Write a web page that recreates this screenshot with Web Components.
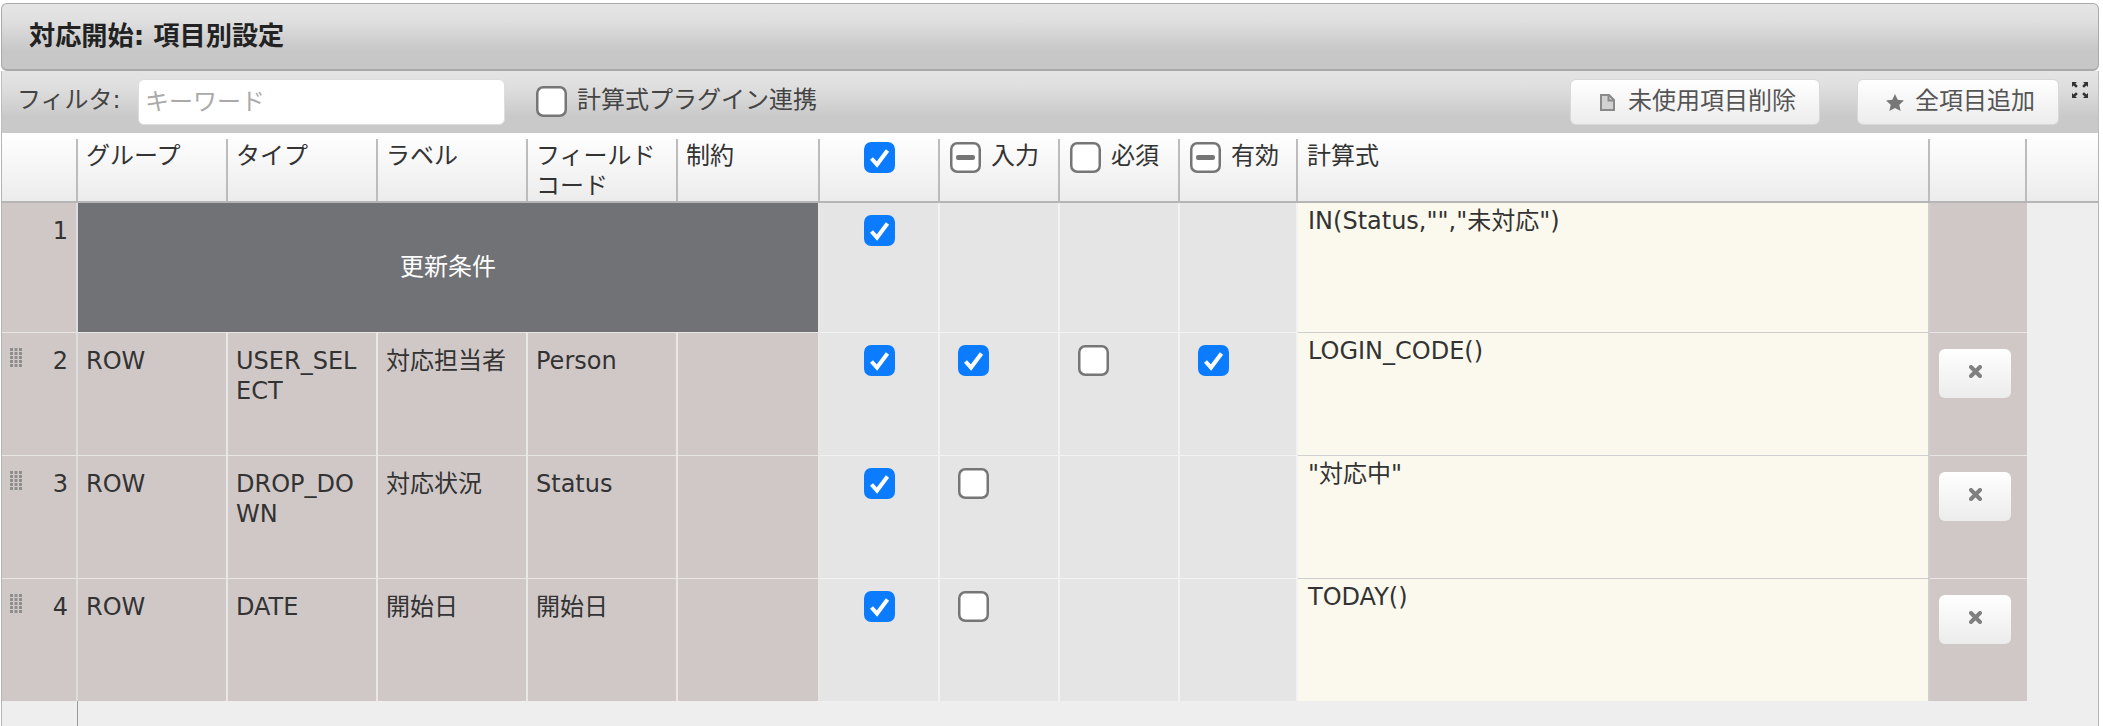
<!DOCTYPE html>
<html lang="ja">
<head>
<meta charset="utf-8">
<title>項目別設定</title>
<style>
    html, body { margin: 0; height: 100%; background: #fff; overflow: hidden; }
    body {
        padding: 3px 4px 0 1px;
        box-sizing: border-box;
        display: flex;
        flex-direction: column;
        font: 24px/30px "DejaVu Sans", "Noto Sans CJK JP", sans-serif;
        color: #333;
    }
</style>
</head>
<body>
<panel-title>対応開始: 項目別設定</panel-title>
<panel-toolbar>
    <span slot="label">フィルタ:</span>
    <check-label slot="link">計算式プラグイン連携</check-label>
    <ui-button icon="file" slot="actions">未使用項目削除</ui-button>
    <ui-button icon="star" slot="actions">全項目追加</ui-button>
</panel-toolbar>
<field-table>
    <table-row kind="head">
        <table-cell kind="head"></table-cell>
        <table-cell kind="head">グループ</table-cell>
        <table-cell kind="head">タイプ</table-cell>
        <table-cell kind="head">ラベル</table-cell>
        <table-cell kind="head">フィールド コード</table-cell>
        <table-cell kind="head">制約</table-cell>
        <table-cell kind="head" center><ui-check state="on"></ui-check></table-cell>
        <table-cell kind="head" tight><ui-check state="mixed"></ui-check>入力</table-cell>
        <table-cell kind="head" tight><ui-check></ui-check>必須</table-cell>
        <table-cell kind="head" tight><ui-check state="mixed"></ui-check>有効</table-cell>
        <table-cell kind="head" wide>計算式</table-cell>
        <table-cell kind="head"></table-cell>
        <table-cell kind="head" last></table-cell>
    </table-row>
    <table-row style="--row-h:130px">
        <table-cell kind="num">1</table-cell>
        <table-cell kind="banner" style="grid-column: span 5">更新条件</table-cell>
        <table-cell kind="flag" center><ui-check state="on"></ui-check></table-cell>
        <table-cell kind="flag"></table-cell>
        <table-cell kind="flag"></table-cell>
        <table-cell kind="flag"></table-cell>
        <table-cell kind="formula">IN(Status,"","未対応")</table-cell>
        <table-cell kind="tool"></table-cell>
    </table-row>
    <table-row>
        <table-cell kind="num" grip>2</table-cell>
        <table-cell>ROW</table-cell>
        <table-cell>USER_SEL<br>ECT</table-cell>
        <table-cell>対応担当者</table-cell>
        <table-cell>Person</table-cell>
        <table-cell></table-cell>
        <table-cell kind="flag" center><ui-check state="on"></ui-check></table-cell>
        <table-cell kind="flag" pad><ui-check state="on"></ui-check></table-cell>
        <table-cell kind="flag" pad><ui-check></ui-check></table-cell>
        <table-cell kind="flag" pad><ui-check state="on"></ui-check></table-cell>
        <table-cell kind="formula">LOGIN_CODE()</table-cell>
        <table-cell kind="tool"><ui-remove></ui-remove></table-cell>
    </table-row>
    <table-row>
        <table-cell kind="num" grip>3</table-cell>
        <table-cell>ROW</table-cell>
        <table-cell>DROP_DO<br>WN</table-cell>
        <table-cell>対応状況</table-cell>
        <table-cell>Status</table-cell>
        <table-cell></table-cell>
        <table-cell kind="flag" center><ui-check state="on"></ui-check></table-cell>
        <table-cell kind="flag" pad><ui-check></ui-check></table-cell>
        <table-cell kind="flag"></table-cell>
        <table-cell kind="flag"></table-cell>
        <table-cell kind="formula">"対応中"</table-cell>
        <table-cell kind="tool"><ui-remove></ui-remove></table-cell>
    </table-row>
    <table-row style="--row-h:122px" end>
        <table-cell kind="num" grip>4</table-cell>
        <table-cell>ROW</table-cell>
        <table-cell>DATE</table-cell>
        <table-cell>開始日</table-cell>
        <table-cell>開始日</table-cell>
        <table-cell></table-cell>
        <table-cell kind="flag" center><ui-check state="on"></ui-check></table-cell>
        <table-cell kind="flag" pad><ui-check></ui-check></table-cell>
        <table-cell kind="flag"></table-cell>
        <table-cell kind="flag"></table-cell>
        <table-cell kind="formula">TODAY()</table-cell>
        <table-cell kind="tool"><ui-remove></ui-remove></table-cell>
    </table-row>
</field-table>

<script>
const COLUMNS = "76px 150px 150px 150px 150px 142px 120px 120px 120px 118px 632px 97px 1fr";

class PanelTitle extends HTMLElement {
    constructor() {
        super();
        this.attachShadow({ mode: "open" });
        this.shadowRoot.innerHTML = `
        <style>
            :host {
                display: flex;
                align-items: center;
                flex: none;
                box-sizing: border-box;
                height: 68px;
                padding: 0 0 2px 27px;
                border: 1px solid #a9a9a9;
                border-bottom-width: 2px;
                border-radius: 6px;
                background: linear-gradient(#e5e5e5, #e0e0e0 25%, #c7c7c7 72%);
                font-size: 26.200px;
                font-weight: 700;
                color: #222;
            }
        </style>
        <slot></slot>
        `;
    }
}

class PanelToolbar extends HTMLElement {
    constructor() {
        super();
        this.attachShadow({ mode: "open" });
        this.shadowRoot.innerHTML = `
        <style>
            :host {
                display: flex;
                align-items: flex-start;
                flex: none;
                box-sizing: border-box;
                height: 62px;
                padding: 8px 0 0 15px;
                border: solid #bdbdbd;
                border-width: 0 1px;
                background: linear-gradient(#e4e4e4, #dfdfdf 25%, #c9c9c9 75%);
                color: #444;
            }
            .label { width: 121px; line-height: 43px; white-space: nowrap; }
            input {
                box-sizing: border-box;
                width: 367px;
                height: 46px;
                margin-right: 31px;
                padding: 0 6px;
                border: 1px solid #ddd;
                border-radius: 6px;
                background: #fff;
                font: inherit;
                outline: none;
            }
            input::placeholder { color: #aaa; }
            .actions {
                display: flex;
                gap: 37px;
                margin-left: auto;
            }
            svg {
                flex: none;
                width: 16px;
                height: 16px;
                margin: 3px 10px 0 13px;
                fill: #333;
            }
        </style>
        <span class="label"><slot name="label"></slot></span>
        <input placeholder="キーワード">
        <slot name="link"></slot>
        <div class="actions"><slot name="actions"></slot></div>
        <svg viewBox="0 0 16 16" aria-hidden="true">
            <path d="M0 0h5L3.400 1.600 5.800 4 4 5.800 1.600 3.400 0 5zM16 0v5l-1.600-1.600L12 5.800 10.200 4l2.400-2.400L11 0zM0 16v-5l1.600 1.600L4 10.200 5.800 12l-2.400 2.400L5 16zM16 16h-5l1.600-1.600-2.400-2.400 1.800-1.800 2.400 2.400L16 11z"/>
        </svg>
        `;
    }
}

class CheckLabel extends HTMLElement {
    constructor() {
        super();
        this.attachShadow({ mode: "open" });
        this.shadowRoot.innerHTML = `
        <style>
            :host {
                display: flex;
                align-items: flex-start;
                gap: 10px;
                height: 46px;
                line-height: 30px;
            }
            ui-check { margin-top: 7px; }
            span { margin-top: 6px; }
        </style>
        <ui-check></ui-check>
        <span><slot></slot></span>
        `;
    }
}

class UiButton extends HTMLElement {
    static get icons() {
        return {
            file: `<path d="M2 1h8l5 5v10H2z" fill="#d2d2d2" stroke="#8a8a8a" stroke-width="2"/><path d="M9.500 1v5.500H15" fill="none" stroke="#8a8a8a" stroke-width="2"/>`,
            star: `<path fill="#777" d="M9 0l2.700 5.800 6.300.7-4.700 4.200 1.300 6.300L9 13.900 3.400 17l1.300-6.300L0 6.500l6.300-.7z"/>`
        };
    }

    constructor() {
        super();
        this.attachShadow({ mode: "open" });
        const icon = UiButton.icons[this.getAttribute("icon")];
        this.shadowRoot.innerHTML = `
        <style>
            :host {
                display: inline-flex;
                align-items: center;
                box-sizing: border-box;
                height: 46px;
                padding: 0 23px 0 28px;
                border: 1px solid #d8d8d8;
                border-radius: 6px;
                background: linear-gradient(#fff, #ececec);
                color: #555;
                line-height: 30px;
            }
            slot { display: block; margin-top: -2px; }
            svg { flex: none; width: 18px; height: 17px; margin-right: 11px; }
        </style>
        <svg viewBox="0 0 18 17" aria-hidden="true">${icon}</svg>
        <slot></slot>
        `;
    }
}

class UiCheck extends HTMLElement {
    constructor() {
        super();
        this.attachShadow({ mode: "open" });
        const state = this.getAttribute("state");
        let mark = "";
        if (state == "on") {
            mark = `<path d="M7.500 16.500l5.500 6L23.500 8.500" fill="none" stroke="#fff" stroke-width="4"/>`;
        }
        if (state == "mixed") {
            mark = `<rect x="6" y="13" width="19" height="5" rx="2" fill="#767676"/>`;
        }
        this.shadowRoot.innerHTML = `
        <style>
            :host {
                display: inline-block;
                flex: none;
                width: 31px;
                height: 31px;
                vertical-align: top;
            }
            :host([state="on"]) .box { fill: #0b7bff; stroke: #0b7bff; }
            svg { display: block; width: 31px; height: 31px; }
            .box { fill: #fff; stroke: #767676; stroke-width: 2.500; }
        </style>
        <svg viewBox="0 0 31 31" aria-hidden="true">
            <rect class="box" x="1.250" y="1.250" width="28.500" height="28.500" rx="6"/>
            ${mark}
        </svg>
        `;
    }
}

class UiRemove extends HTMLElement {
    constructor() {
        super();
        this.attachShadow({ mode: "open" });
        this.shadowRoot.innerHTML = `
        <style>
            :host {
                display: flex;
                align-items: center;
                justify-content: center;
                box-sizing: border-box;
                width: 72px;
                height: 49px;
                border-radius: 6px;
                background: linear-gradient(#fff, #ececec);
            }
            svg { width: 13px; height: 13px; margin-bottom: 5px; }
        </style>
        <svg viewBox="0 0 13 13" aria-hidden="true">
            <path d="M2 2l9 9M11 2l-9 9" stroke="#808080" stroke-width="4" stroke-linecap="round"/>
        </svg>
        `;
    }
}

class FieldTable extends HTMLElement {
    constructor() {
        super();
        this.attachShadow({ mode: "open" });
        this.shadowRoot.innerHTML = `
        <style>
            :host {
                display: block;
                flex: 1;
                border: solid #b5b5b5;
                border-width: 0 1px;
                background: linear-gradient(to right, transparent 75px, #999 75px, #999 76px, transparent 76px), #eee;
            }
        </style>
        <slot></slot>
        `;
    }
}

class TableRow extends HTMLElement {
    constructor() {
        super();
        this.attachShadow({ mode: "open" });
        this.shadowRoot.innerHTML = `
        <style>
            :host {
                display: grid;
                grid-template-columns: ${COLUMNS};
                height: var(--row-h, 123px);
            }
            :host([kind="head"]) {
                box-sizing: border-box;
                height: 70px;
                padding-top: 6px;
                border-bottom: 2px solid #b5b5b5;
                background: linear-gradient(#fff, #ececec);
            }
        </style>
        <slot></slot>
        `;
    }
}

class TableCell extends HTMLElement {
    constructor() {
        super();
        this.attachShadow({ mode: "open" });
        this.shadowRoot.innerHTML = `
        <style>
            :host {
                display: block;
                position: relative;
                box-sizing: border-box;
                min-width: 0;
                padding: 13px 8px 0 8px;
                border: solid #e9e6e6;
                border-width: 0 2px 1px 0;
                background: #d0c8c7;
                color: #333;
            }
            :host([center]) { text-align: center; padding-left: 0; padding-right: 0; padding-top: 12px; }
            :host([pad]) { padding-left: 18px; padding-top: 12px; }
            :host([kind="head"]) {
                padding-top: 2px;
                border-color: #bcbcbc;
                border-bottom: 0;
                background: none;
            }
            :host([kind="head"][wide]) { padding-left: 9px; }
            :host([kind="head"][center]) { padding-top: 3px; }
            :host([kind="head"][tight]) {
                display: flex;
                align-items: flex-start;
                gap: 10px;
                padding-top: 3px;
                padding-left: 10px;
                line-height: 28px;
            }
            :host([last]) { border-right: 0; }
            :host([kind="num"]) {
                padding-right: 8px;
                text-align: right;
                border-right-color: #ddd;
            }
            :host([grip]) .grip { display: block; }
            .grip {
                display: none;
                position: absolute;
                left: 8px;
                top: 15px;
                width: 12px;
                height: 19px;
            }
            :host([kind="banner"]) {
                display: flex;
                align-items: center;
                justify-content: center;
                padding: 0 0 2px;
                background: #717276;
                color: #fff;
            }
            :host([kind="flag"]) { background: #e5e5e5; border-color: #f2f2f2; }
            :host([kind="formula"]) {
                padding: 3px 10px 0;
                background: #fbf9ee;
                border-color: #cfcfcf;
            }
            :host([kind="tool"]) { padding: 16px 0 0 9px; border-right: 0; }
            :host-context([end]) { border-bottom-width: 0; }
        </style>
        <svg class="grip" viewBox="0 0 12 19" aria-hidden="true">
            <g fill="#8e8e8e">
                <path d="M0 0h3v3H0zM4.500 0h3v3h-3zM9 0h3v3H9zM0 4h3v3H0zM4.500 4h3v3h-3zM9 4h3v3H9zM0 8h3v3H0zM4.500 8h3v3h-3zM9 8h3v3H9zM0 12h3v3H0zM4.500 12h3v3h-3zM9 12h3v3H9zM0 16h3v3H0zM4.500 16h3v3h-3zM9 16h3v3H9z"/>
            </g>
        </svg>
        <slot></slot>
        `;
    }
}

customElements.define("panel-title", PanelTitle);
customElements.define("panel-toolbar", PanelToolbar);
customElements.define("check-label", CheckLabel);
customElements.define("ui-button", UiButton);
customElements.define("ui-check", UiCheck);
customElements.define("ui-remove", UiRemove);
customElements.define("field-table", FieldTable);
customElements.define("table-row", TableRow);
customElements.define("table-cell", TableCell);
</script>
</body>
</html>
